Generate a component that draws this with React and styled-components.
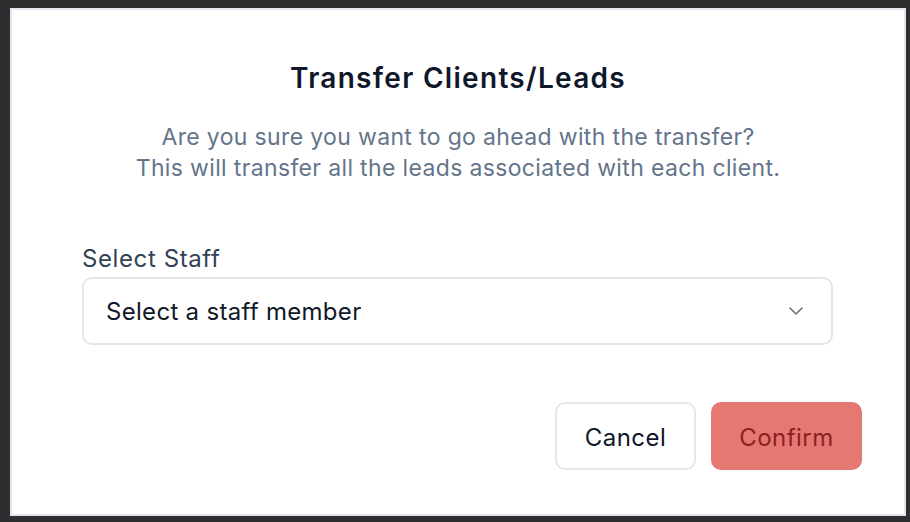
import React from "react";
import styled, { createGlobalStyle } from "styled-components";

const Global = createGlobalStyle`
  html, body { margin: 0; padding: 0; background: #2d2e2f; }
  body { font-family: Inter, "Noto Sans", sans-serif; }
  * { box-sizing: border-box; }
`;

const Page = styled.div`
  padding: 8px 4px 6px 10px;
  height: 522px;
`;

const Modal = styled.div`
  width: 896px;
  height: 508px;
  background: #ffffff;
  border: 2px solid #e3e6ec;
  display: flex;
  flex-direction: column;
  padding: 50px 42px 44px 70px;
`;

const Title = styled.h2`
  margin: 0;
  text-align: center;
  font-size: 28px;
  line-height: 36px;
  font-weight: 600;
  color: #0f172a;
  letter-spacing: 1.3px;
  padding-right: 28px;
`;

const Description = styled.p`
  margin: 26px 0 0;
  text-align: center;
  font-size: 23px;
  line-height: 31px;
  font-weight: 400;
  color: #64748b;
  letter-spacing: 0.35px;
  padding-right: 28px;
`;

const Field = styled.div`
  margin-top: 62px;
  display: flex;
  flex-direction: column;
  gap: 5px;
  width: 751px;
`;

const Label = styled.label`
  font-size: 24px;
  line-height: 26px;
  color: #334155;
  font-weight: 400;
  letter-spacing: 0.6px;
`;

const SelectBox = styled.button`
  height: 68px;
  width: 100%;
  border: 2px solid #e3e6ec;
  border-radius: 10px;
  background: #fff;
  display: flex;
  align-items: center;
  justify-content: space-between;
  padding: 0 23px 0 22px;
  font-family: inherit;
  font-size: 24px;
  letter-spacing: 0.3px;
  color: #111827;
  cursor: pointer;
`;

const Footer = styled.div`
  margin-top: auto;
  display: flex;
  justify-content: flex-end;
  gap: 15px;
`;

const Button = styled.button`
  height: 68px;
  padding: 2px 0 0;
  width: ${(p) => (p.$primary ? "151px" : "141px")};
  border-radius: 10px;
  font-family: inherit;
  font-size: 24px;
  letter-spacing: 0.45px;
  font-weight: 400;
  border: ${(p) => (p.$primary ? "none" : "2px solid #e3e6ec")};
  background: ${(p) => (p.$primary ? "#e67874" : "#ffffff")};
  color: ${(p) => (p.$primary ? "#8a2222" : "#0f172a")};
  cursor: pointer;
`;

const Chevron = () => (
  <svg width="24" height="24" viewBox="0 0 24 24" fill="none" stroke="#6b7280" strokeWidth="1.6" strokeLinecap="round" strokeLinejoin="round">
    <path d="m6 9 6 6 6-6" />
  </svg>
);

export default function App() {
  return (
    <>
      <Global />
      <Page>
        <Modal>
          <Title>Transfer Clients/Leads</Title>
          <Description>
            Are you sure you want to go ahead with the transfer?
            <br />
            This will transfer all the leads associated with each client.
          </Description>
          <Field>
            <Label>Select Staff</Label>
            <SelectBox type="button">
              <span>Select a staff member</span>
              <Chevron />
            </SelectBox>
          </Field>
          <Footer>
            <Button type="button">Cancel</Button>
            <Button type="button" $primary>Confirm</Button>
          </Footer>
        </Modal>
      </Page>
    </>
  );
}
